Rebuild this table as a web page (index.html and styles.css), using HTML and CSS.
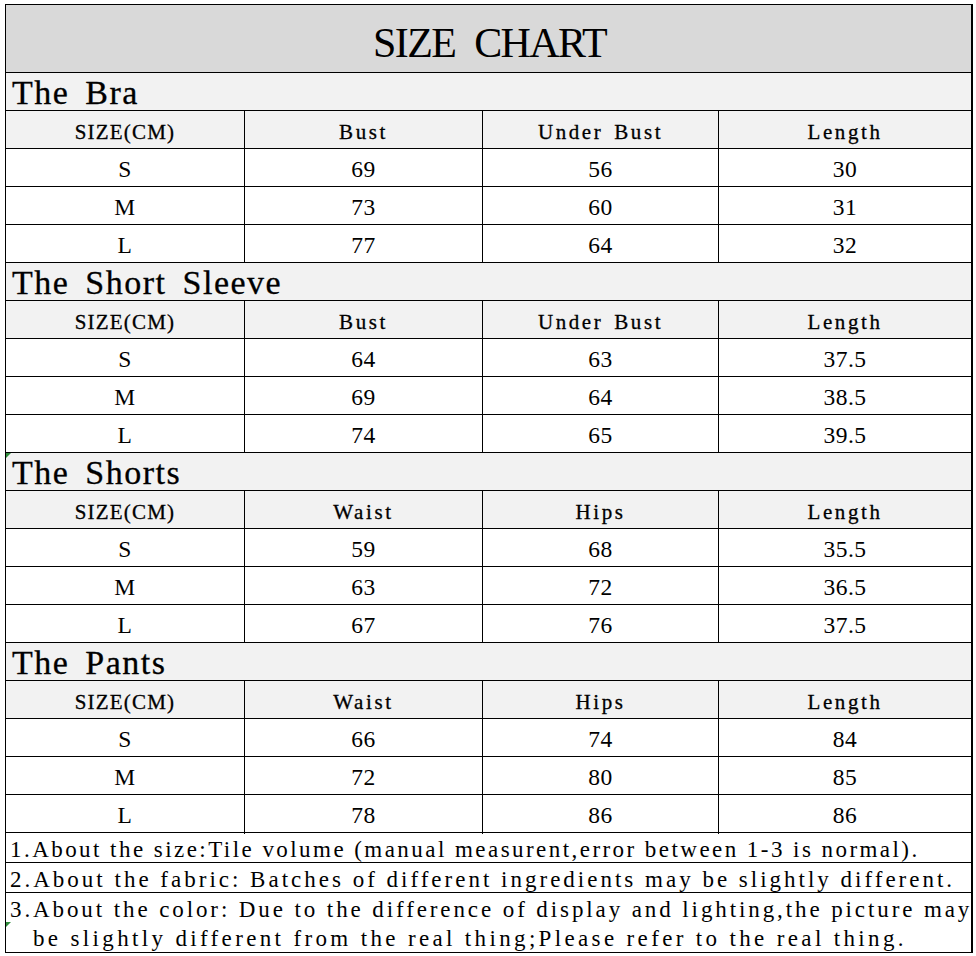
FILE: index.html
```html
<!DOCTYPE html>
<html>
<head>
<meta charset="utf-8">
<link rel="stylesheet" href="styles.css">
</head>
<body>
<div class="chart">
  <div class="title">SIZE CHART</div>

  <div class="section">The Bra</div>
  <div class="row head"><div class="caps">SIZE(CM)</div><div>Bust</div><div>Under Bust</div><div>Length</div></div>
  <div class="row"><div>S</div><div>69</div><div>56</div><div>30</div></div>
  <div class="row"><div>M</div><div>73</div><div>60</div><div>31</div></div>
  <div class="row"><div>L</div><div>77</div><div>64</div><div>32</div></div>

  <div class="section">The Short Sleeve</div>
  <div class="row head"><div class="caps">SIZE(CM)</div><div>Bust</div><div>Under Bust</div><div>Length</div></div>
  <div class="row"><div>S</div><div>64</div><div>63</div><div>37.5</div></div>
  <div class="row"><div>M</div><div>69</div><div>64</div><div>38.5</div></div>
  <div class="row"><div>L</div><div>74</div><div>65</div><div>39.5</div></div>

  <div class="section marked">The Shorts</div>
  <div class="row head"><div class="caps">SIZE(CM)</div><div>Waist</div><div>Hips</div><div>Length</div></div>
  <div class="row"><div>S</div><div>59</div><div>68</div><div>35.5</div></div>
  <div class="row"><div>M</div><div>63</div><div>72</div><div>36.5</div></div>
  <div class="row"><div>L</div><div>67</div><div>76</div><div>37.5</div></div>

  <div class="section">The Pants</div>
  <div class="row head"><div class="caps">SIZE(CM)</div><div>Waist</div><div>Hips</div><div>Length</div></div>
  <div class="row"><div>S</div><div>66</div><div>74</div><div>84</div></div>
  <div class="row"><div>M</div><div>72</div><div>80</div><div>85</div></div>
  <div class="row"><div>L</div><div>78</div><div>86</div><div>86</div></div>

  <div class="note"><span class="line n1">1.About the size:Tile volume (manual measurent,error between 1-3 is normal).</span></div>
  <div class="note"><span class="line n2">2.About the fabric: Batches of different ingredients may be slightly different.</span></div>
  <div class="note tall marked-low"><span class="line n3">3.About the color: Due to the difference of display and lighting,the picture may</span><span class="line n4">be slightly different from the real thing;Please refer to the real thing.</span></div>
</div>
</body>
</html>
```

FILE: styles.css
```css
html, body {
  margin: 0;
  padding: 0;
  background: #ffffff;
}

body {
  width: 976px;
  height: 956px;
  overflow: hidden;
  font-family: "Liberation Serif", "Noto Sans CJK SC", serif;
  color: #000;
}

.chart {
  box-sizing: border-box;
  margin: 4px 0 0 5px;
  width: 968px;
  border-top: 1px solid #000;
  border-left: 1px solid #000;
  border-right: 2px solid #000;
  border-bottom: 1px solid #000;
}

.title {
  box-sizing: border-box;
  height: 68px;
  border-bottom: 1px solid #000;
  background: #d9d9d9;
  text-align: center;
  font-size: 42px;
  letter-spacing: -1.6px;
  word-spacing: 10px;
  line-height: 68px;
  padding-top: 4px;
  padding-left: 2px;
}

.section {
  position: relative;
  box-sizing: border-box;
  height: 38px;
  border-bottom: 1px solid #000;
  background: #f2f2f2;
  font-size: 34px;
  letter-spacing: 1.5px;
  word-spacing: 6px;
  line-height: 38px;
  padding-left: 6px;
  padding-top: 1px;
  -webkit-text-stroke: 0.3px #000;
}

.marked::before,
.marked-low::before {
  content: "";
  position: absolute;
  left: 0;
  top: 0;
  width: 0;
  height: 0;
  border-top: 5px solid #2e8b3a;
  border-right: 5px solid transparent;
}

.marked-low::before {
  top: 29px;
}

.row {
  display: grid;
  grid-template-columns: 239px 238px 236px 1fr;
  height: 38px;
  box-sizing: border-box;
  border-bottom: 1px solid #000;
}

.row > div {
  box-sizing: border-box;
  border-right: 1px solid #000;
  text-align: center;
  font-size: 23.5px;
  letter-spacing: 0.5px;
  line-height: 37px;
  padding-top: 2px;
}

.row > div:last-child {
  border-right: none;
}

.row.head {
  background: #f2f2f2;
}

.row.head > div {
  font-size: 21px;
  letter-spacing: 2.6px;
  word-spacing: 3px;
  padding-top: 3px;
  -webkit-text-stroke: 0.3px #000;
}

.row.head > div.caps {
  letter-spacing: 1.2px;
}

.note {
  position: relative;
  box-sizing: border-box;
  height: 30px;
  border-bottom: 1px solid #000;
  font-size: 23px;
  line-height: 29px;
  padding-left: 4px;
  padding-top: 2px;
  white-space: nowrap;
}

.note.tall {
  height: 59px;
  border-bottom: none;
}

.line {
  display: block;
}

.n1 { letter-spacing: 2.45px; }
.n2 { letter-spacing: 3.0px; }
.n3 { letter-spacing: 2.9px; }
.n4 { letter-spacing: 3.35px; padding-left: 23px; }
```
